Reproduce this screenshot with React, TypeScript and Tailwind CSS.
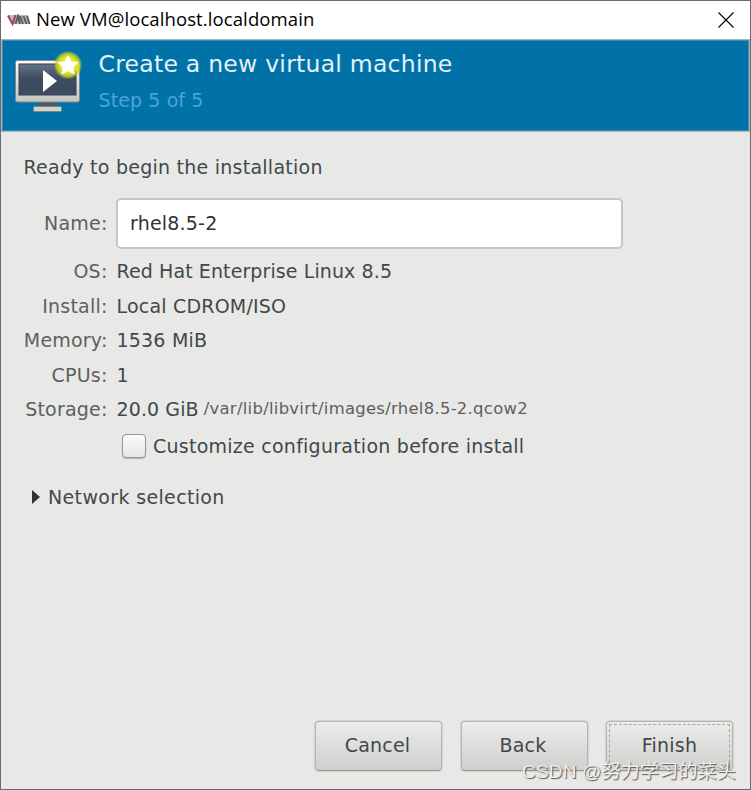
import { ReactNode } from 'react';

interface ISummaryRowProps {
  label: string;
  children: ReactNode;
}

function SummaryRow({ label, children }: ISummaryRowProps) {
  return (
    <div className="flex h-[34.5px] items-center whitespace-nowrap">
      <div className="w-[106.5px] text-right text-[#5c6061]">{label}</div>
      <div className="ml-[9px] flex items-center">{children}</div>
    </div>
  );
}

interface IWizardButtonProps {
  children: ReactNode;
  focused?: boolean;
}

function WizardButton({ children, focused }: IWizardButtonProps) {
  return (
    <button
      type="button"
      className="h-[50px] w-[127px] rounded-[4px] border border-[#b4b4b0] border-b-[#94948c] bg-linear-to-b from-[#ececeb] to-[#cfcfcd] p-[2px] tracking-[0.2px] shadow-[0_0_1px_1px_#d2d2cf]"
    >
      <span
        className={
          focused
            ? 'flex h-full items-center justify-center border border-dashed border-[#a5a5a2] pb-[2px]'
            : 'flex h-full items-center justify-center pr-[2px] pb-[2px]'
        }
      >
        {children}
      </span>
    </button>
  );
}

function VmLogo() {
  return (
    <svg width="24" height="12" viewBox="0 0 24 12" fill="none" strokeWidth="2">
      <path d="M1 1h20l2 9H6z" fill="#bdbdbd" />
      <path d="M1 1.5 5.5 10 8.5 1" stroke="#a34457" />
      <path d="m8.5 10 2.5-8 2 8M13 2l3 8M16.5 2l3 8M20 2l2.5 8" stroke="#5c5c5c" />
    </svg>
  );
}

function NewVmIcon() {
  return (
    <svg width="70" height="66" viewBox="0 0 70 66">
      <defs>
        <linearGradient id="frame" x2="0" y2="1">
          <stop offset="0" stopColor="#fafafa" />
          <stop offset="1" stopColor="#c4c4c2" />
        </linearGradient>
        <linearGradient id="screen" x2="0" y2="1">
          <stop offset="0" stopColor="#65758a" />
          <stop offset=".45" stopColor="#3e4c60" />
          <stop offset="1" stopColor="#3e4a5e" />
        </linearGradient>
        <radialGradient id="glow">
          <stop offset=".55" stopColor="#e4ea1c" />
          <stop offset=".8" stopColor="#c9d424" stopOpacity=".8" />
          <stop offset="1" stopColor="#a8c030" stopOpacity="0" />
        </radialGradient>
      </defs>
      <path d="M26 50h15v6H26z" fill="#555a5c" />
      <rect x="19.5" y="55.5" width="28" height="5" rx="1" fill="#d1d1cf" stroke="#7d8282" />
      <rect x="1.5" y="9.5" width="64" height="41.5" rx="2" fill="url(#frame)" stroke="#858988" />
      <rect x="5" y="13" width="57" height="31" fill="url(#screen)" stroke="#354052" />
      <path d="M29 19v22l14-11z" fill="#fff" />
      <circle cx="54" cy="14" r="14.5" fill="url(#glow)" />
      <path
        d="m54 4.5 3 6.2 6.8.9-5 4.7 1.3 6.7-6.1-3.4-6.1 3.4 1.3-6.7-5-4.7 6.8-.9z"
        fill="#fff"
        stroke="#fff"
        strokeLinejoin="round"
      />
    </svg>
  );
}

export default function App() {
  return (
    <div className="relative flex h-[790px] w-[751px] flex-col border border-[#6c6a6d] bg-[#e8e8e6] font-['DejaVu_Sans','Liberation_Sans',sans-serif] text-[19px] tracking-[0.2px] text-[#41484a]">
      {/* Title bar */}
      <div className="flex h-[38px] shrink-0 items-center bg-white pr-4 pl-[6px]">
        <VmLogo />
        <span className="ml-[5px] pb-px font-['Open_Sans','Noto_Sans',sans-serif] text-[18.5px] leading-none tracking-[0.1px] text-black">
          New VM@localhost.localdomain
        </span>
        <svg className="ml-auto" width="16" height="16" viewBox="0 0 16 16" stroke="#000" strokeWidth="1.1">
          <path d="m.5.5 15 15m0-15-15 15" />
        </svg>
      </div>

      {/* Wizard header */}
      <div className="h-[93px] shrink-0 border border-[#a3b8bd]">
        <div className="flex h-full border border-[#3f8cb0] bg-[#0072a8] pl-[11px]">
          <div className="pt-[10px]">
            <NewVmIcon />
          </div>
          <div className="ml-[14.5px] whitespace-nowrap">
            <div className="mt-[9px] text-[23.5px] leading-[28px] tracking-[0.25px] text-[#e3f1f8]">
              Create a new virtual machine
            </div>
            <div className="mt-[10px] leading-[24px] tracking-[0.1px] text-[#4ea3d5]">
              Step 5 of 5
            </div>
          </div>
        </div>
      </div>

      {/* Summary */}
      <div className="pt-[22px]">
        <div className="pl-[22.5px] leading-[26px] tracking-[0.25px]">
          Ready to begin the installation
        </div>
        <div className="mt-[18px] mb-[5px] flex items-center">
          <label htmlFor="name" className="w-[106.5px] text-right text-[#5c6061]">
            Name:
          </label>
          <input
            id="name"
            defaultValue="rhel8.5-2"
            className="ml-[8.5px] h-[51px] w-[507px] rounded-[5px] border-2 border-[#c6c6c2] bg-white px-[12px] pb-[2px] tracking-[0.2px] text-[#2e3436] outline-none"
          />
        </div>
        <SummaryRow label="OS:">
          <span className="tracking-[0.1px]">Red Hat Enterprise Linux 8.5</span>
        </SummaryRow>
        <SummaryRow label="Install:">Local CDROM/ISO</SummaryRow>
        <SummaryRow label="Memory:">1536 MiB</SummaryRow>
        <SummaryRow label="CPUs:">1</SummaryRow>
        <SummaryRow label="Storage:">
          <span className="tracking-[0.1px]">20.0 GiB</span>
          <span className="ml-[5px] text-[16.4px] tracking-[0.3px] text-[#5c6061]">
            /var/lib/libvirt/images/rhel8.5-2.qcow2
          </span>
        </SummaryRow>
        <div className="mt-[6px] ml-[121px] flex items-center">
          <span className="h-[24px] w-[24px] rounded-[4px] border-[1.5px] border-[#979792] bg-linear-to-b from-[#fafafa] to-[#e6e6e5] shadow-[0_1px_1px_#b5b5b1]" />
          <span className="ml-[7px] leading-[26px] tracking-[0.25px]">
            Customize configuration before install
          </span>
        </div>
        <div className="mt-[25px] ml-[31px] flex items-center">
          <svg width="8" height="14" viewBox="0 0 8 14" fill="#2e3436">
            <path d="M0 0v14l8-7z" />
          </svg>
          <span className="ml-[8px] leading-[26px] tracking-[0.35px]">Network selection</span>
        </div>
      </div>

      <div className="mt-auto mr-[17px] mb-[18px] flex justify-end gap-[18.5px]">
        <WizardButton>Cancel</WizardButton>
        <WizardButton>Back</WizardButton>
        <WizardButton focused>Finish</WizardButton>
      </div>

      <div className="absolute right-[14px] bottom-[5px] font-['Liberation_Sans','Noto_Sans_CJK_SC',sans-serif] text-[19px] leading-[24px] whitespace-nowrap text-[#ededeb] [text-shadow:1px_1px_1px_#555]">
        CSDN @努力学习的菜头
      </div>
    </div>
  );
}
